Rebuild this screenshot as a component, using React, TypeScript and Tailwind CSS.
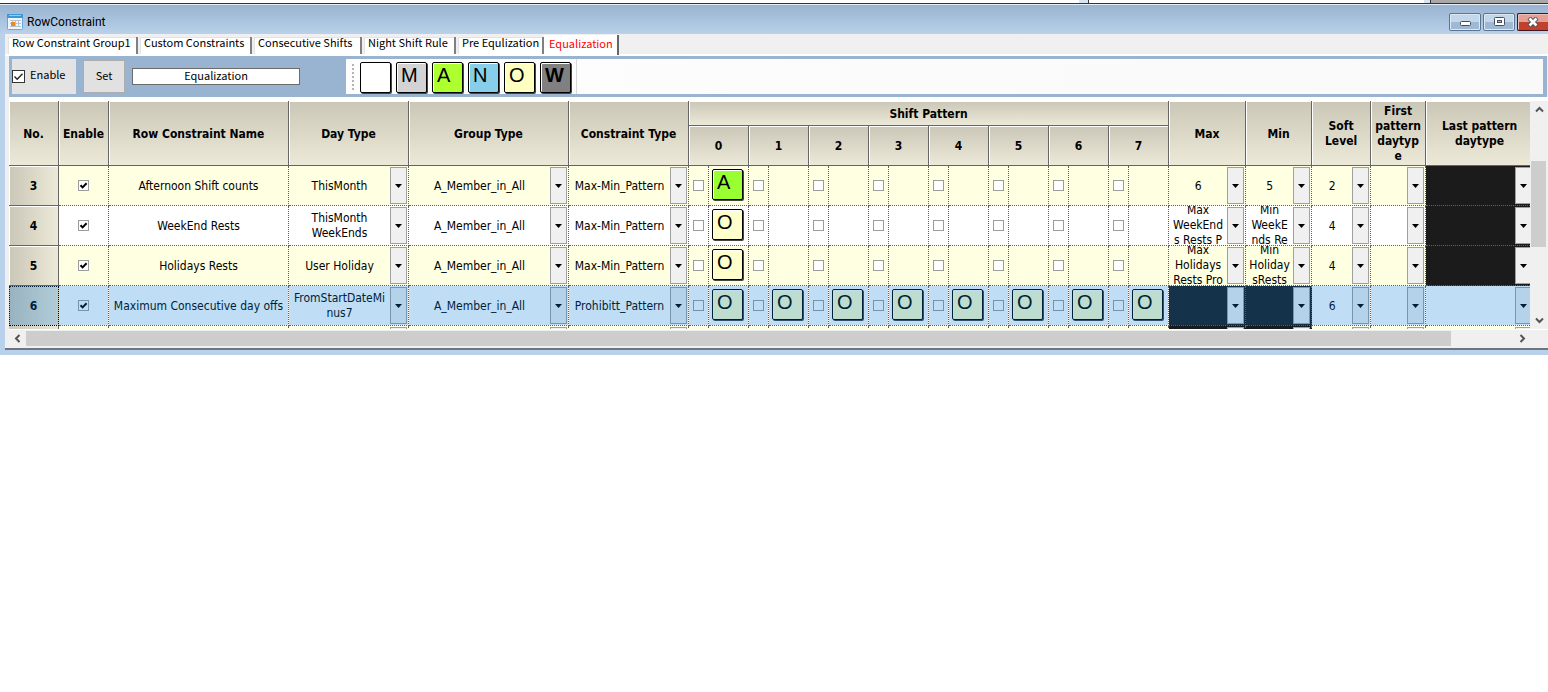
import { useState } from "react";
import clsx from "clsx";

type Row = {
  no: number;
  name: string;
  dayType: string;
  group: string;
  constraint: string;
  pattern: string[];
  max: string | null;
  min: string | null;
  soft: string;
  lastLocked?: boolean;
  selected?: boolean;
};

// null in max/min means the cell is blacked out
const ROWS: Row[] = [
  {
    no: 3, name: "Afternoon Shift counts", dayType: "ThisMonth", group: "A_Member_in_All",
    constraint: "Max-Min_Pattern", pattern: ["A"], max: "6", min: "5", soft: "2", lastLocked: true,
  },
  {
    no: 4, name: "WeekEnd Rests", dayType: "ThisMonth\nWeekEnds", group: "A_Member_in_All",
    constraint: "Max-Min_Pattern", pattern: ["O"], max: "Max\nWeekEnd\ns Rests P", min: "Min\nWeekE\nnds Re", soft: "4", lastLocked: true,
  },
  {
    no: 5, name: "Holidays Rests", dayType: "User Holiday", group: "A_Member_in_All",
    constraint: "Max-Min_Pattern", pattern: ["O"], max: "Max\nHolidays\nRests Pro", min: "Min\nHoliday\nsRests", soft: "4", lastLocked: true,
  },
  {
    no: 6, name: "Maximum Consecutive day offs", dayType: "FromStartDateMi\nnus7", group: "A_Member_in_All",
    constraint: "Prohibitt_Pattern", pattern: ["O", "O", "O", "O", "O", "O", "O", "O"], max: null, min: null, soft: "6", selected: true,
  },
];

const TABS = [
  { label: "Row Constraint Group1", width: "w-[130px]" },
  { label: "Custom Constraints", width: "w-[112px]" },
  { label: "Consecutive Shifts", width: "w-[108px]" },
  { label: "Night Shift Rule", width: "w-[92px]" },
  { label: "Pre Equlization", width: "w-[86px]" },
  { label: "Equalization", width: "w-[75px]" },
];

const SHIFTS = [0, 1, 2, 3, 4, 5, 6, 7];

const TILE_COLORS: Record<string, string> = {
  "": "bg-white",
  M: "bg-[#d3d3d3]",
  A: "bg-[#adff2f]",
  N: "bg-[#87ceeb]",
  O: "bg-[#ffffc0]",
  W: "bg-[#808080] font-bold",
};

function Tile({ code, color }: { code: string; color?: string }) {
  return (
    <span
      className={clsx(
        "flex h-[31px] w-[31px] items-start rounded-[2px] border border-black pt-px pl-1 text-left font-['Liberation_Sans',sans-serif] text-[20px] leading-[22px] text-black shadow-[1px_1px_0_#444,inset_1px_1px_0_#fff]",
        color ?? TILE_COLORS[code],
      )}
    >
      {code}
    </span>
  );
}

function Check({ label, checked }: { label: string; checked?: boolean }) {
  return (
    <label className="relative flex h-[11px] w-[11px]">
      <input
        type="checkbox"
        aria-label={label}
        defaultChecked={checked}
        className="peer h-[11px] w-[11px] appearance-none border border-[#9c9c9c] bg-white"
      />
      <svg viewBox="0 0 11 11" className="pointer-events-none absolute inset-0 hidden peer-checked:block">
        <path d="M2.5 5.2 L4.6 7.4 L8.6 3.2" fill="none" stroke="#000" strokeWidth="2" />
      </svg>
    </label>
  );
}

function DropCell({ label, value, locked, selected }: { label: string; value: string; locked?: boolean; selected?: boolean }) {
  const multiline = value.includes("\n");
  return (
    <td className={clsx("relative border-r border-b border-dotted border-[#5f6368] p-0", locked && "bg-[#1b1b1b]")}>
      <div className="relative h-[39px] overflow-hidden pr-[18px]">
        {multiline && (
          <div className="flex h-full items-center justify-center text-center leading-[15px] whitespace-pre">{value}</div>
        )}
        <select
          aria-label={label}
          defaultValue={value}
          className={clsx(
            "h-full appearance-none bg-transparent pt-[2px] text-center [text-align-last:center]",
            multiline ? "absolute inset-0 w-full opacity-0" : "w-full",
          )}
        >
          <option value={value}>{multiline ? "" : value}</option>
        </select>
        <span className="pointer-events-none absolute top-px right-px flex h-[37px] w-[17px] items-center justify-center border border-[#a0a0a0] bg-[#f0f0f0]">
          <svg viewBox="0 0 7 4" className="h-1 w-[7px]">
            <path d="M0 0 H7 L3.5 4 Z" fill="#000" />
          </svg>
        </span>
      </div>
      {selected && <Tint />}
    </td>
  );
}

function Tint() {
  return <span className="pointer-events-none absolute inset-0 bg-[#0078d7]/25" />;
}

function HeadCell({ children, rowSpan, colSpan }: { children: React.ReactNode; rowSpan?: number; colSpan?: number }) {
  return (
    <th
      rowSpan={rowSpan}
      colSpan={colSpan}
      className="border-r border-b border-[#666] bg-gradient-to-b from-[#cbc7b8] to-[#ece9d8] p-0 pt-[2px] leading-[15px] whitespace-pre-line shadow-[inset_1px_1px_0_#fff]"
    >
      {children}
    </th>
  );
}

function GridRow({ row, index }: { row: Row; index: number }) {
  const cell = "relative border-r border-b border-dotted border-[#5f6368] p-0";
  const sel = row.selected;
  return (
    <tr className={clsx("h-10", index % 2 === 0 ? "bg-[#ffffe1]" : "bg-white")}>
      <th
        className={clsx(
          "relative border-r border-b bg-gradient-to-r from-[#cbc7b8] to-[#ece9d8] p-0 pt-[2px]",
          sel ? "border-dotted border-black outline-1 -outline-offset-1 outline-black outline-dotted" : "border-[#666] shadow-[inset_1px_1px_0_#fff]",
        )}
      >
        {row.no}
        {sel && <Tint />}
      </th>
      <td className={cell}>
        <div className="flex justify-center">
          <Check label={`Enable row ${row.no}`} checked />
        </div>
        {sel && <Tint />}
      </td>
      <td className={clsx(cell, "text-center whitespace-nowrap")}>
        <div className="pt-[2px]">{row.name}</div>
        {sel && <Tint />}
      </td>
      <DropCell label="Day Type" value={row.dayType} selected={sel} />
      <DropCell label="Group Type" value={row.group} selected={sel} />
      <DropCell label="Constraint Type" value={row.constraint} selected={sel} />
      {SHIFTS.map((s) => [
        <td key={`c${s}`} className={cell}>
          <div className="flex justify-center">
            <Check label={`Row ${row.no} shift ${s}`} />
          </div>
          {sel && <Tint />}
        </td>,
        <td key={`t${s}`} className={cell}>
          {row.pattern[s] && (
            <div className="pb-[2px] pl-[3px]">
              <Tile code={row.pattern[s]} color={row.pattern[s] === "A" ? "bg-[#99ff33]" : "bg-[#ffffcc]"} />
            </div>
          )}
          {sel && <Tint />}
        </td>,
      ])}
      <DropCell label="Max" value={row.max ?? ""} locked={row.max === null} selected={sel} />
      <DropCell label="Min" value={row.min ?? ""} locked={row.min === null} selected={sel} />
      <DropCell label="Soft Level" value={row.soft} selected={sel} />
      <DropCell label="First pattern daytype" value="" selected={sel} />
      <DropCell label="Last pattern daytype" value="" locked={row.lastLocked} selected={sel} />
    </tr>
  );
}

// next row, of which only the top edge is in view
function PeekRow() {
  const cell = "border-r border-dotted border-[#5f6368] p-0";
  return (
    <tr className="h-10 bg-[#ffffe1]">
      <th className="border-r border-[#666] bg-gradient-to-r from-[#cbc7b8] to-[#ece9d8] p-0" />
      <td className={cell} />
      <td className={cell} />
      <DropCell label="Day Type" value="" />
      <DropCell label="Group Type" value="" />
      <DropCell label="Constraint Type" value="" />
      {SHIFTS.map((s) => [<td key={`c${s}`} className={cell} />, <td key={`t${s}`} className={cell} />])}
      <DropCell label="Max" value="" locked />
      <DropCell label="Min" value="" locked />
      <DropCell label="Soft Level" value="" />
      <DropCell label="First pattern daytype" value="" />
      <DropCell label="Last pattern daytype" value="" />
    </tr>
  );
}

function Grid() {
  return (
    <div className="h-[228px] min-w-0 flex-1 overflow-hidden">
      <table className="w-[1525px] table-fixed border-separate border-spacing-0 font-['DejaVu_Sans_Condensed',sans-serif] text-[12px] leading-[15px] text-black">
        <colgroup>
          <col className="w-[50px]" />
          <col className="w-[50px]" />
          <col className="w-[180px]" />
          <col className="w-[120px]" />
          <col className="w-[160px]" />
          <col className="w-[120px]" />
          {SHIFTS.map((s) => [<col key={`c${s}`} className="w-[20px]" />, <col key={`t${s}`} className="w-[40px]" />])}
          <col className="w-[77px]" />
          <col className="w-[66px]" />
          <col className="w-[59px]" />
          <col className="w-[55px]" />
          <col className="w-[108px]" />
        </colgroup>
        <thead>
          <tr className="h-[25px]">
            <HeadCell rowSpan={2}>No.</HeadCell>
            <HeadCell rowSpan={2}>Enable</HeadCell>
            <HeadCell rowSpan={2}>Row Constraint Name</HeadCell>
            <HeadCell rowSpan={2}>Day Type</HeadCell>
            <HeadCell rowSpan={2}>Group Type</HeadCell>
            <HeadCell rowSpan={2}>Constraint Type</HeadCell>
            <HeadCell colSpan={16}>Shift Pattern</HeadCell>
            <HeadCell rowSpan={2}>Max</HeadCell>
            <HeadCell rowSpan={2}>Min</HeadCell>
            <HeadCell rowSpan={2}>{"Soft\nLevel"}</HeadCell>
            <HeadCell rowSpan={2}>{"First\npattern\ndaytyp\ne"}</HeadCell>
            <HeadCell rowSpan={2}>{"Last pattern\ndaytype"}</HeadCell>
          </tr>
          <tr className="h-10">
            {SHIFTS.map((s) => (
              <HeadCell key={s} colSpan={2}>{s}</HeadCell>
            ))}
          </tr>
        </thead>
        <tbody>
          {ROWS.map((row, i) => (
            <GridRow key={row.no} row={row} index={i} />
          ))}
          <PeekRow />
        </tbody>
      </table>
    </div>
  );
}

function ScrollArrow({ label, d }: { label: string; d: string }) {
  return (
    <button aria-label={label} className="flex h-[17px] w-[17px] flex-none items-center justify-center bg-[#f0f0f0]">
      <svg viewBox="0 0 9 9" className="h-[9px] w-[9px]">
        <path d={d} fill="none" stroke="#555" strokeWidth="2" />
      </svg>
    </button>
  );
}

function TitleBar() {
  const btn =
    "flex h-[18px] w-8 items-center justify-center rounded-[2px] border border-[#5c7592] bg-gradient-to-b from-[#c3d6ea] from-50% to-[#9fb9d4] to-50% shadow-[inset_0_0_0_1px_#dce8f4]";
  return (
    <div className="flex h-[29px] items-center bg-gradient-to-b from-[#99b4d1] to-[#b9d1ea] pt-[5px] pl-[7px]">
      <svg viewBox="0 0 16 16" className="h-4 w-4">
        <rect x="0.5" y="0.5" width="15" height="15" rx="1" fill="#eef6fd" stroke="#6aa6d6" />
        <rect x="0" y="0" width="16" height="4" fill="#3b9ad6" />
        <path d="M2 1.5 H14" stroke="#8fd0f5" />
        <path d="M3 6.5 H14 M3 9.5 H14 M3 12.5 H14 M5.5 6 V13 M8.5 6 V13 M11.5 6 V13" stroke="#b4c3d0" />
        <rect x="4" y="8" width="4" height="4" fill="#ee8a1d" />
      </svg>
      <h1 className="ml-1 flex-1 font-['Roboto',sans-serif] text-[12px] leading-4 text-black">RowConstraint</h1>
      <div className="flex gap-[2px]">
        <button aria-label="Minimize" className={btn}>
          <svg viewBox="0 0 12 10" className="h-[10px] w-3">
            <rect x="1.5" y="4.5" width="10" height="4" rx="1" fill="#fff" stroke="#454f5c" />
          </svg>
        </button>
        <button aria-label="Restore" className={btn}>
          <svg viewBox="0 0 12 10" className="h-[10px] w-3">
            <rect x="1.5" y="0.5" width="10" height="8" rx="1" fill="#fff" stroke="#454f5c" />
            <rect x="4.5" y="3.5" width="4" height="2" fill="#a8c0da" stroke="#454f5c" />
          </svg>
        </button>
        <button
          aria-label="Close"
          className="flex h-[18px] w-[31px] items-center justify-center rounded-l-[2px] border border-r-0 border-[#431422] bg-gradient-to-b from-[#e3a096] from-50% to-[#c1422c] to-50% shadow-[inset_1px_1px_0_#efc0b8]"
        >
          <svg viewBox="0 0 12 10" className="h-[10px] w-3">
            <path d="M2 1 L10 9 M10 1 L2 9" stroke="#454f5c" strokeWidth="4.4" />
            <path d="M2.5 1.5 L9.5 8.5 M9.5 1.5 L2.5 8.5" stroke="#fff" strokeWidth="2.6" />
          </svg>
        </button>
      </div>
    </div>
  );
}

function Tabs() {
  const [active, setActive] = useState("Equalization");
  return (
    <div role="tablist" className="flex h-[22px] items-start gap-[2px] border-b-2 border-white bg-[#f0f0f0] pt-px pl-[3px]">
      {TABS.map((t) => (
        <button
          key={t.label}
          role="tab"
          aria-selected={t.label === active}
          onClick={() => setActive(t.label)}
          className={clsx(
            "flex-none border-r-2 bg-white text-left whitespace-nowrap",
            t.width,
            t.label === active
              ? "-ml-[2px] h-5 border-[#666] pb-1 pl-[5px] leading-4 text-[#ff0000]"
              : "mt-[2px] h-[17px] border-[#808080] pb-1.5 pl-1 leading-[11px] shadow-[inset_1px_1px_0_#e3e3e3]",
          )}
        >
          {t.label}
        </button>
      ))}
    </div>
  );
}

function Toolbar() {
  return (
    <div className="mr-px flex h-[41px] items-center bg-[#99b4d1] py-[3px] pr-1 pl-[3px]">
      <label className="flex h-[35px] w-16 items-center gap-[5px] bg-[#e3e3e3]">
        <span className="relative flex h-[13px] w-[13px]">
          <input type="checkbox" defaultChecked className="peer h-[13px] w-[13px] appearance-none border border-[#333] bg-white" />
          <svg viewBox="0 0 13 13" className="pointer-events-none absolute inset-0 hidden peer-checked:block">
            <path d="M2.5 6.5 L5.2 9.2 L10.5 3.8" fill="none" stroke="#222" strokeWidth="1.4" />
          </svg>
        </span>
        <span className="pb-1">Enable</span>
      </label>
      <button className="ml-[7px] h-[33px] w-[42px] border border-[#adadad] bg-[#e1e1e1] pb-[3px]">Set</button>
      <input
        aria-label="Group name"
        defaultValue="Equalization"
        className="ml-[7px] h-[17px] w-[168px] border border-[#6b6b6b] bg-white pb-[3px] text-center"
      />
      <div className="ml-[46px] flex h-[35px] flex-1 items-center bg-gradient-to-r from-[#fdfdfd] to-[#f9f9f9] pl-1.5">
        <svg viewBox="0 0 2 26" className="h-[26px] w-[2px]">
          <path d="M1 0 V26" stroke="#b4b4b4" strokeWidth="2" strokeDasharray="2 2" />
        </svg>
        <div className="ml-1.5 flex h-full items-center gap-[5px] border-r border-[#d8d8d8] pt-[2px] pr-[5px]">
          {["", "M", "A", "N", "O", "W"].map((code) => (
            <button key={code} aria-label={code || "Blank"}>
              <Tile code={code} />
            </button>
          ))}
        </div>
      </div>
    </div>
  );
}

export default function App() {
  return (
    <div className="min-h-screen bg-white font-['Noto_Sans_CJK_JP',sans-serif] text-[11px] text-black">
      {/* edge of the windows behind */}
      <div className="flex h-[3px]">
        <div className="flex-1" />
        <div className="w-[9px] bg-[#d6e4f3]" />
        <div className="w-px bg-[#333]" />
        <div className="w-[335px]" />
        <div className="w-[6px] bg-[#d6e4f3]" />
        <div className="w-px bg-[#333]" />
        <div className="w-[117px] bg-[#a9a9a9]" />
      </div>

      <div className="border-t border-[#333]">
        <div className="h-px bg-[#e8eff7]" />
        <TitleBar />
        <div className="flex bg-[#b9d1ea] pb-[5px]">
          <div className="w-[5px] flex-none" />
          <div className="min-w-0 flex-1 border-b-2 border-[#6d7580] bg-[#f0f0f0]">
            <Tabs />
            <div className="ml-1">
              <Toolbar />
              <div className="bg-white pt-1">
                <div className="flex">
                  <Grid />
                  <div className="flex w-[18px] flex-none flex-col bg-[#f0f0f0] pl-px">
                    <ScrollArrow label="Scroll up" d="M1 6.5 L4.5 3 L8 6.5" />
                    <div className="h-[43px]" />
                    <div className="mr-[2px] h-[86px] bg-[#cdcdcd]" />
                    <div className="flex-1" />
                    <ScrollArrow label="Scroll down" d="M1 2.5 L4.5 6 L8 2.5" />
                  </div>
                </div>
                <div className="h-px bg-white" />
                <div className="flex h-4 items-center bg-[#f0f0f0] pr-[17px]">
                  <ScrollArrow label="Scroll left" d="M6.5 1 L3 4.5 L6.5 8" />
                  <div className="h-[15px] flex-1 bg-[#cdcdcd]" />
                  <div className="w-[63px]" />
                  <ScrollArrow label="Scroll right" d="M2.5 1 L6 4.5 L2.5 8" />
                </div>
              </div>
              <div className="h-[2px]" />
            </div>
          </div>
        </div>
      </div>
    </div>
  );
}
